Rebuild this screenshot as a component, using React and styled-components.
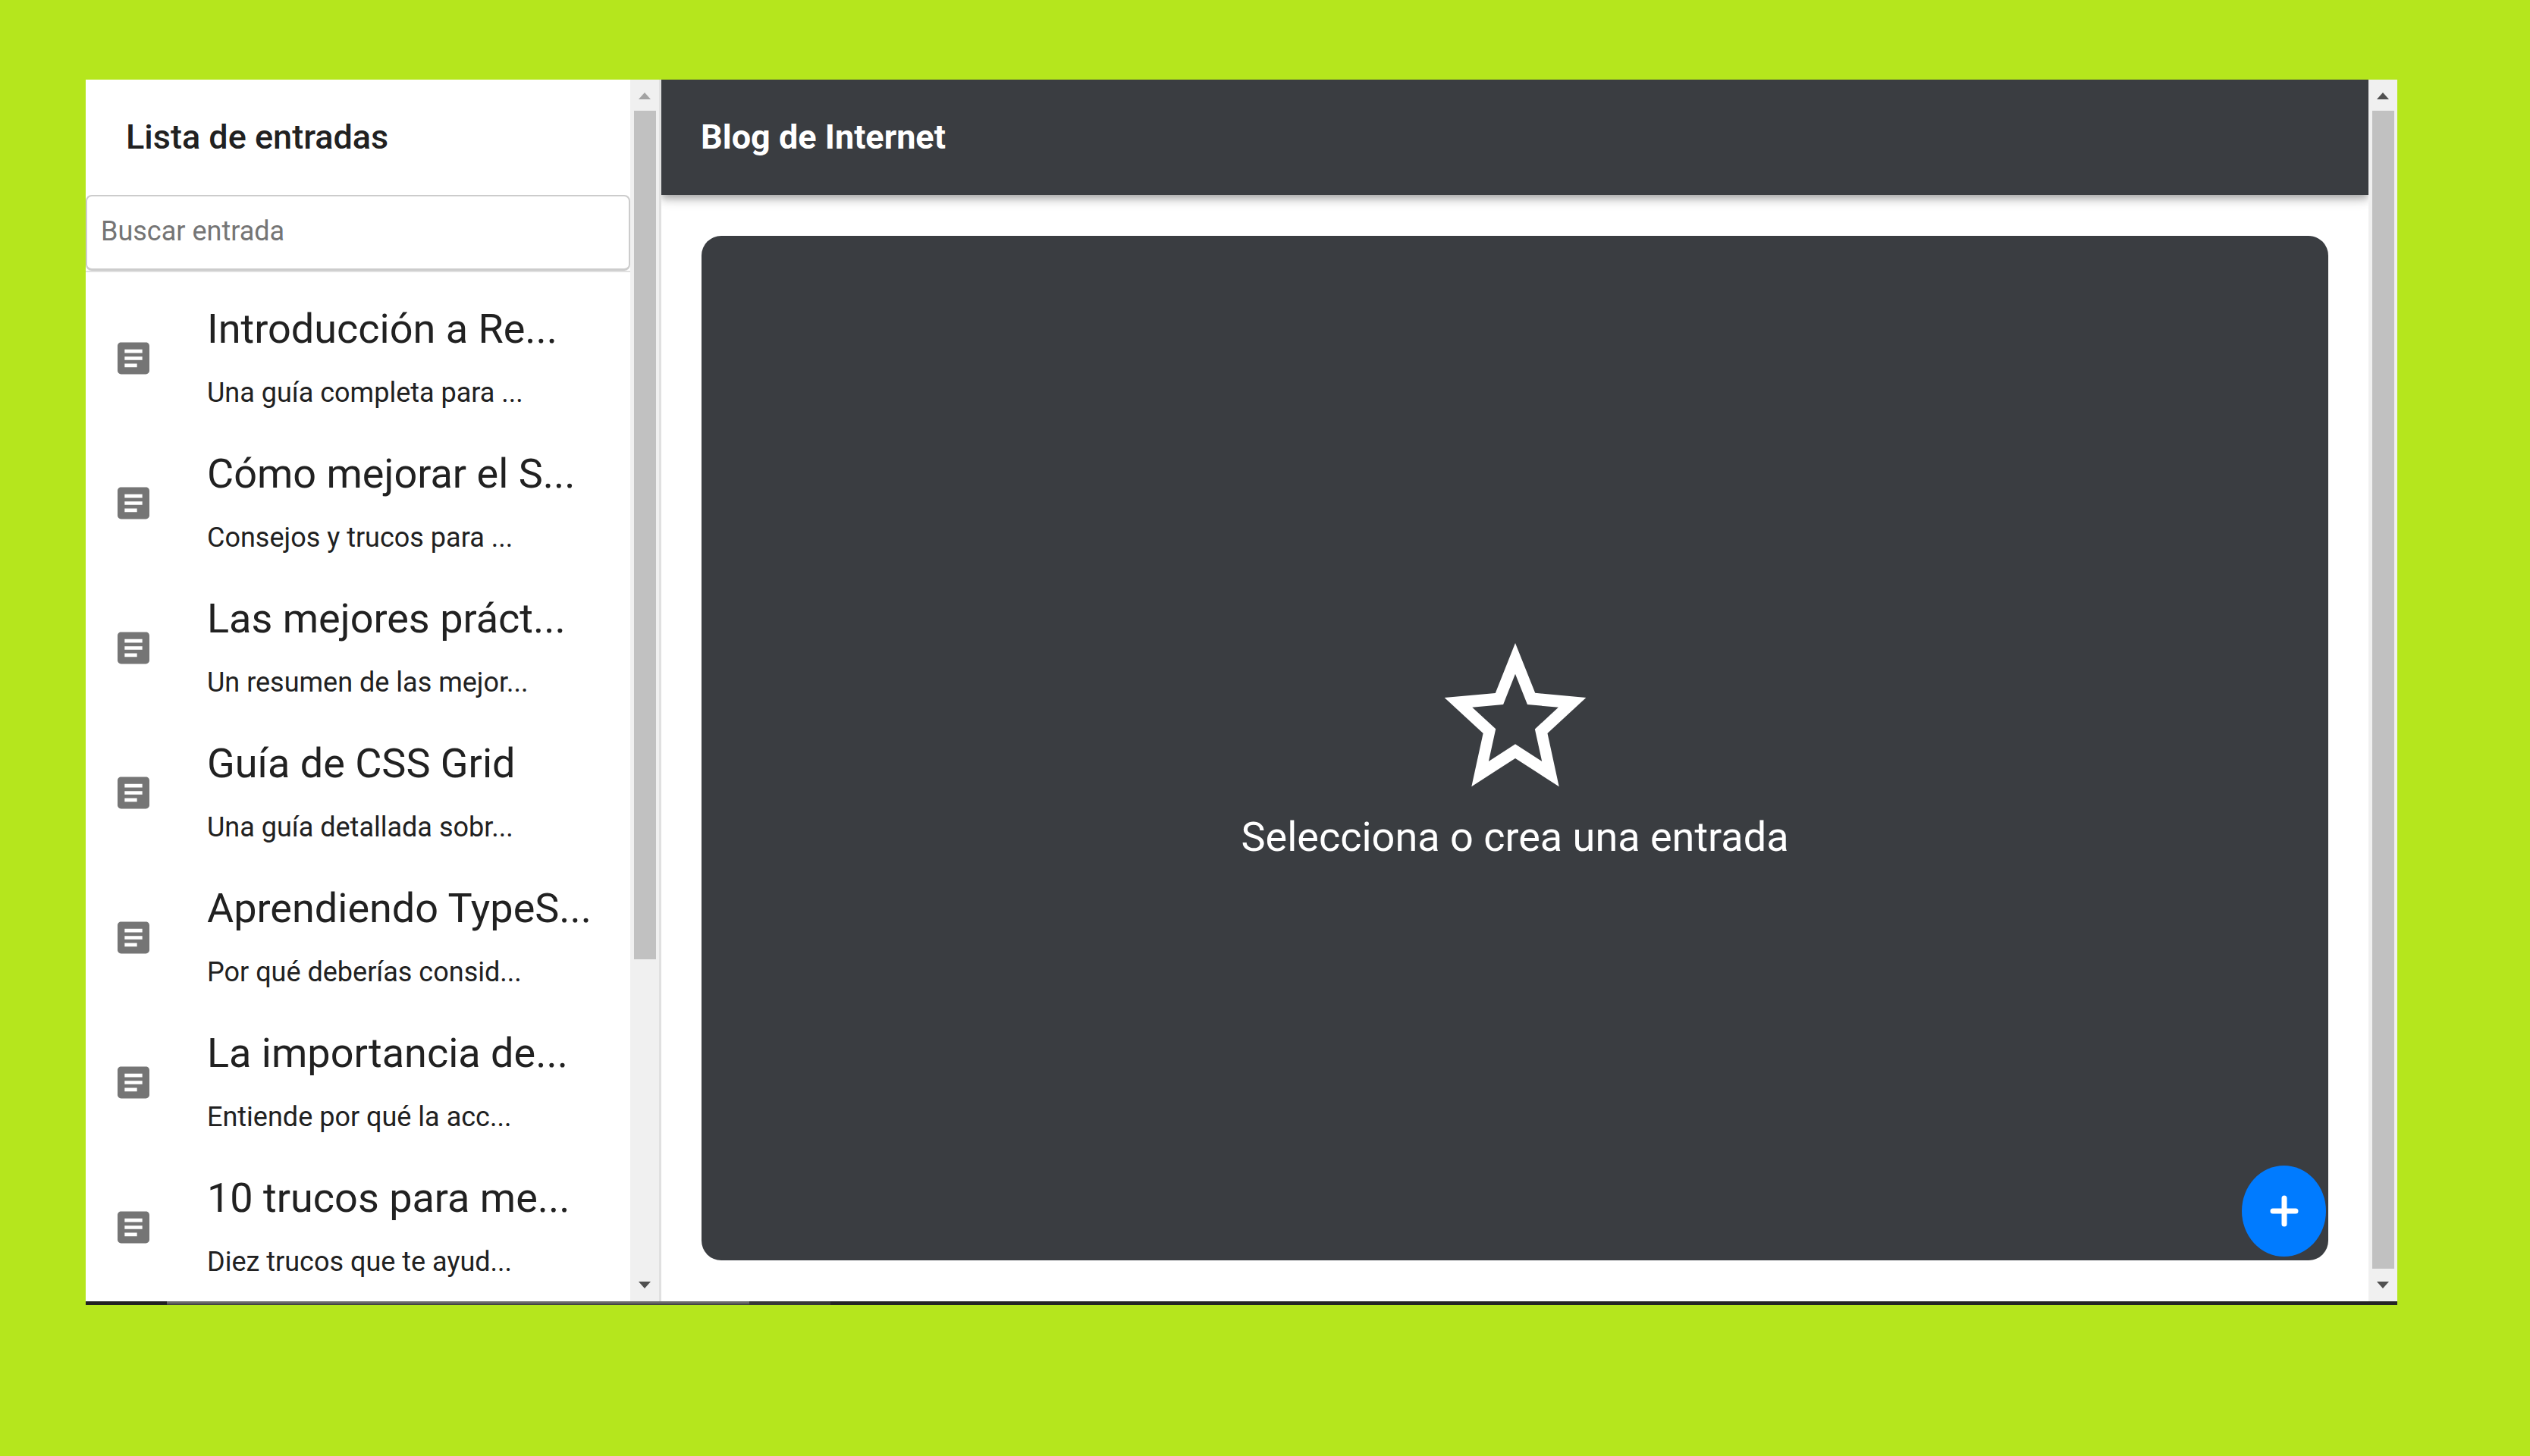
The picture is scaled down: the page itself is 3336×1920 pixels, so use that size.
import React from "react";
import styled, { createGlobalStyle } from "styled-components";

const entries = [
  { title: "Introducción a Re...", summary: "Una guía completa para ..." },
  { title: "Cómo mejorar el S...", summary: "Consejos y trucos para ..." },
  { title: "Las mejores práct...", summary: "Un resumen de las mejor..." },
  { title: "Guía de CSS Grid", summary: "Una guía detallada sobr..." },
  { title: "Aprendiendo TypeS...", summary: "Por qué deberías consid..." },
  { title: "La importancia de...", summary: "Entiende por qué la acc..." },
  { title: "10 trucos para me...", summary: "Diez trucos que te ayud..." },
];

const GlobalStyle = createGlobalStyle`
  *, *::before, *::after { box-sizing: border-box; }
  body { margin: 0; }
  body, button, input { font-family: Roboto, "Liberation Sans", sans-serif; }
  h1, h2, h3, p, ul { margin: 0; padding: 0; }
`;

const Page = styled.div`
  display: flex;
  height: 100vh;
  padding: 105px 175px 199px 113px;
  background: #b5e61d;
`;

const Window = styled.div`
  flex: 1;
  min-width: 0;
  display: flex;
  flex-direction: column;
  background: #fff;
  color: #212121;
`;

const Columns = styled.div`
  flex: 1;
  min-height: 0;
  display: flex;
`;

const Sidebar = styled.aside`
  flex: none;
  width: 759px;
  display: flex;
  border-right: 3px solid #e0e0e0;
`;

const SidebarContent = styled.div`
  flex: 1;
  min-width: 0;
  overflow: hidden;
`;

const SidebarHeader = styled.header`
  display: flex;
  align-items: center;
  height: 152px;
  padding: 0 53px;
`;

const Heading = styled.h2`
  font-size: 45px;
  line-height: 64px;
  font-weight: ${(p) => p.$weight};
`;

const SearchBox = styled.div`
  border-bottom: 2px solid #e0e0e0;
`;

const SearchInput = styled.input`
  display: block;
  width: 100%;
  height: 100px;
  padding: 0 18px 4px;
  border: 2px solid #ccc;
  border-bottom-width: 3px;
  border-radius: 8px;
  background: #fff;
  color: #212121;
  font-size: 36px;
  outline: none;

  &::placeholder {
    color: #757575;
    opacity: 1;
  }
`;

const EntryList = styled.ul`
  padding-top: 18px;
  list-style: none;
`;

const EntryRow = styled.li`
  display: flex;
  align-items: center;
  height: 191px;
  padding-left: 35px;
`;

const EntryIcon = styled.svg`
  flex: none;
  width: 56px;
  height: 57px;
  margin-right: 69px;
  fill: #757575;
`;

const EntryTitle = styled.h3`
  font-size: 54px;
  line-height: 91px;
  font-weight: 400;
  white-space: nowrap;
`;

const EntrySummary = styled.p`
  font-size: 36px;
  line-height: 79px;
  white-space: nowrap;
`;

const ScrollTrack = styled.div`
  flex: none;
  width: 38px;
  display: flex;
  flex-direction: column;
  align-items: center;
  background: #f0f0f0;
`;

const ScrollArrow = styled.svg`
  flex: none;
  width: 16px;
  height: 9px;
  margin: 17px 0 ${(p) => (p.$up ? 15 : 17)}px;
  fill: ${(p) => (p.$muted ? "#a3a3a3" : "#505050")};
`;

const ScrollThumb = styled.div`
  flex: ${(p) => p.$share} 0 0;
  width: 29px;
  background: #c1c1c1;
`;

const ScrollSpace = styled.div`
  flex: ${(p) => p.$share} 0 0;
`;

const Main = styled.main`
  flex: 1;
  min-width: 0;
  display: flex;
  flex-direction: column;
`;

const AppBar = styled.header`
  display: flex;
  align-items: center;
  height: 152px;
  padding: 0 52px;
  background: #3a3d41;
  color: #fff;
  box-shadow: 0 4px 8px -2px rgba(0, 0, 0, 0.2), 0 8px 10px rgba(0, 0, 0, 0.14),
    0 2px 20px rgba(0, 0, 0, 0.12);
  clip-path: inset(0 0 -40px 0);
`;

const Content = styled.div`
  flex: 1;
  display: flex;
  padding: 54px 53px;
`;

const EmptyState = styled.section`
  position: relative;
  flex: 1;
  display: flex;
  flex-direction: column;
  align-items: center;
  justify-content: center;
  border-radius: 26px;
  background: #3a3d41;
  color: #fff;
`;

const StarIcon = styled.svg`
  width: 224px;
  height: 239px;
  fill: #fff;
`;

const EmptyText = styled.p`
  padding-bottom: 4px;
  font-size: 54px;
  line-height: 74px;
`;

const AddButton = styled.button`
  position: absolute;
  right: 3px;
  bottom: 5px;
  width: 111px;
  height: 120px;
  display: flex;
  align-items: center;
  justify-content: center;
  padding: 0;
  border: 0;
  border-radius: 50%;
  background: #007bff;
`;

const PlusIcon = styled.svg`
  width: 38px;
  height: 42px;
  stroke: #fff;
  stroke-width: 7;
  stroke-linecap: round;
`;

const BottomEdge = styled.div`
  flex: none;
  display: flex;
  height: 5px;
`;

const EdgePart = styled.div`
  flex: ${(p) => p.$share} 0 0;
  background: ${(p) => p.$color};
`;

function Scrollbar({ atTop, thumb, rest }) {
  return (
    <ScrollTrack aria-hidden="true">
      <ScrollArrow $up $muted={atTop} viewBox="0 0 16 9">
        <path d="M8 0l8 9H0z" />
      </ScrollArrow>
      <ScrollThumb $share={thumb} />
      <ScrollSpace $share={rest} />
      <ScrollArrow viewBox="0 0 16 9">
        <path d="M0 0h16L8 9z" />
      </ScrollArrow>
    </ScrollTrack>
  );
}

function Entry({ title, summary }) {
  return (
    <EntryRow>
      <EntryIcon viewBox="0 0 24 24" aria-hidden="true">
        <path d="M19 3H5c-1.100 0-2 .9-2 2v14c0 1.100.9 2 2 2h14c1.100 0 2-.9 2-2V5c0-1.100-.9-2-2-2zm-5 14H7v-2h7v2zm3-4H7v-2h10v2zm0-4H7V7h10v2z" />
      </EntryIcon>
      <div>
        <EntryTitle>{title}</EntryTitle>
        <EntrySummary>{summary}</EntrySummary>
      </div>
    </EntryRow>
  );
}

export default function App() {
  return (
    <Page>
      <GlobalStyle />
      <Window>
        <Columns>
          <Sidebar>
            <SidebarContent>
              <SidebarHeader>
                <Heading $weight={500}>Lista de entradas</Heading>
              </SidebarHeader>
              <SearchBox>
                <SearchInput type="text" placeholder="Buscar entrada" aria-label="Buscar entrada" />
              </SearchBox>
              <EntryList>
                {entries.map((entry) => (
                  <Entry key={entry.title} {...entry} />
                ))}
              </EntryList>
            </SidebarContent>
            <Scrollbar atTop thumb={1120} rest={409} />
          </Sidebar>
          <Main>
            <AppBar>
              <Heading as="h1" $weight={700}>Blog de Internet</Heading>
            </AppBar>
            <Content>
              <EmptyState>
                <StarIcon viewBox="0 0 24 24" preserveAspectRatio="none" aria-hidden="true">
                  <path d="M22 9.240l-7.190-.62L12 2 9.190 8.630 2 9.240l5.460 4.730L5.820 21 12 17.270 18.180 21l-1.630-7.030L22 9.240zM12 15.400l-3.760 2.270 1-4.280-3.320-2.880 4.380-.38L12 6.100l1.710 4.040 4.380.38-3.320 2.880 1 4.280L12 15.400z" />
                </StarIcon>
                <EmptyText>Selecciona o crea una entrada</EmptyText>
                <AddButton type="button" aria-label="Crear entrada">
                  <PlusIcon viewBox="0 0 38 42" aria-hidden="true">
                    <path d="M19 4v34M4 21h30" />
                  </PlusIcon>
                </AddButton>
              </EmptyState>
            </Content>
          </Main>
          <Scrollbar thumb={1526} rest={0} />
        </Columns>
        <BottomEdge aria-hidden="true">
          <EdgePart $share={107} $color="#222" />
          <EdgePart $share={768} $color="linear-gradient(#6a6a6a 60%, #444 60%)" />
          <EdgePart $share={107} $color="#383838" />
          <EdgePart $share={2066} $color="#252525" />
        </BottomEdge>
      </Window>
    </Page>
  );
}
